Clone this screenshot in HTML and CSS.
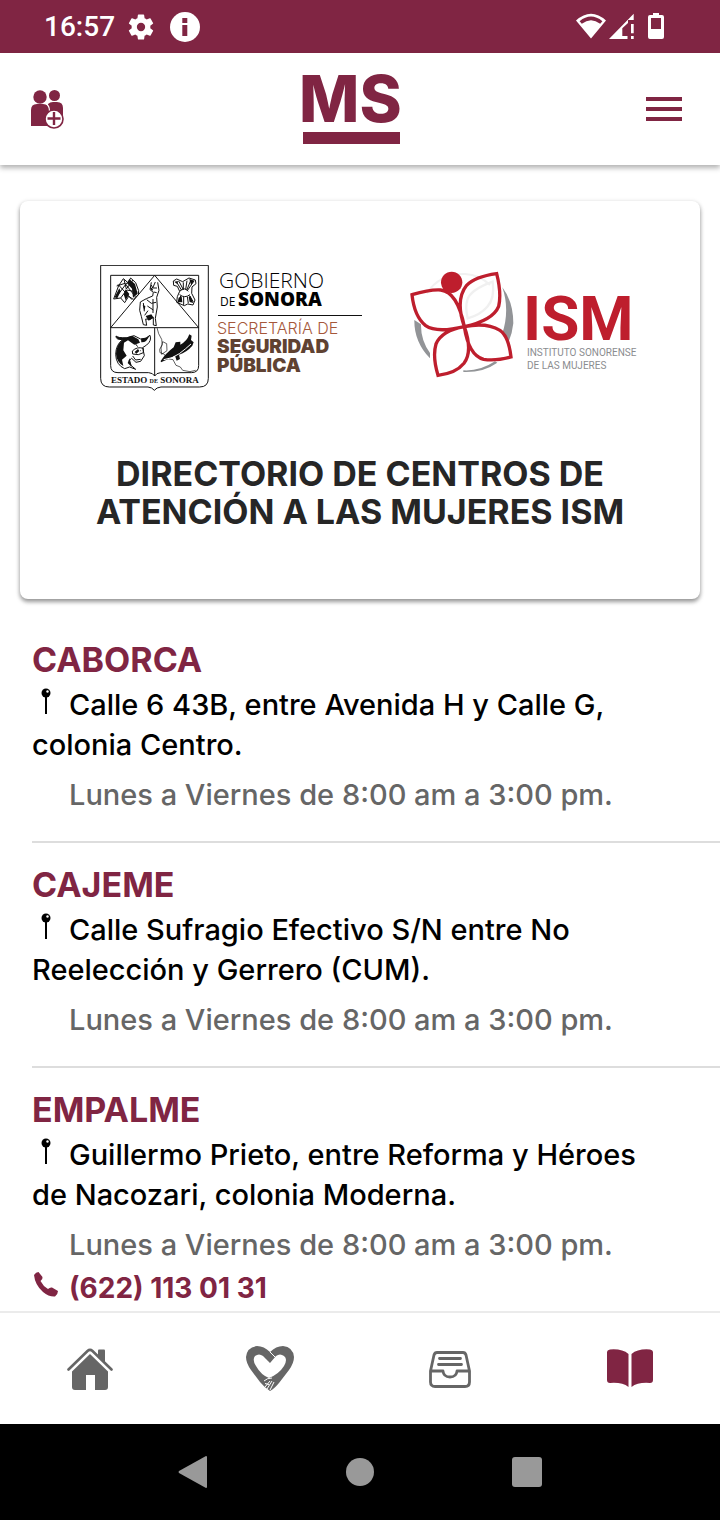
FILE: index.html
```html
<!DOCTYPE html>
<html lang="es">
<head>
<meta charset="utf-8">
<meta name="viewport" content="width=device-width, initial-scale=1">
<title>Directorio de Centros de Atención a las Mujeres ISM</title>
<link rel="stylesheet" href="styles.css">
</head>
<body>
<div class="status-bar">
  <div class="status-left">
    <span class="clock">16:57</span>
    <svg width="26" height="26" viewBox="2 2 20 20" fill="#fff" aria-hidden="true"><path d="M19.14 12.94c.04-.3.06-.61.06-.94s-.02-.64-.07-.94l2.03-1.58a.49.49 0 0 0 .12-.61l-1.92-3.32a.49.49 0 0 0-.59-.22l-2.39.96a7 7 0 0 0-1.62-.94l-.36-2.54A.48.48 0 0 0 13.92 2.400h-3.840a.48.48 0 0 0-.47.41l-.36 2.540a7.300 7.300 0 0 0-1.620.94l-2.390-.96a.49.49 0 0 0-.59.22L2.740 8.870a.48.48 0 0 0 .12.61l2.030 1.580c-.05.3-.09.63-.09.94s.02.64.07.94l-2.030 1.580a.49.49 0 0 0-.12.61l1.920 3.320c.12.22.37.29.59.22l2.390-.96c.5.38 1.030.7 1.620.94l.36 2.540c.05.24.24.41.48.41h3.840c.24 0 .44-.17.47-.41l.36-2.540a7 7 0 0 0 1.620-.94l2.390.96c.22.08.47 0 .59-.22l1.920-3.320a.48.48 0 0 0-.12-.61zM12 15.200a3.200 3.200 0 1 1 0-6.400 3.200 3.200 0 0 1 0 6.400z"/></svg>
    <svg class="info" width="30" height="30" viewBox="0 0 30 30" aria-hidden="true"><circle cx="15" cy="15" r="15" fill="#fff"/><path d="M12.300 6h5v5h-5zM12.300 13h5v11h-5z" fill="#802543"/></svg>
  </div>
  <div class="status-right">
    <svg width="88" height="27" viewBox="0 0 88 27" fill="#fff" aria-hidden="true">
      <path fill-rule="evenodd" d="M0 7.500Q15-6 30 7.500L15 25.500ZM3.600 8.200 5.800 10.800Q15 3.500 24.200 10.800L26.400 8.200Q15-1 3.600 8.200Z"/>
      <path d="M57.700.700V7H52V10L46.300 15.300V23H51.500V26H33ZM55 11h2.700v9.300H55zM55 23h2.700v3H55z"/>
      <path fill-rule="evenodd" d="M77 0h6v2h3q2 0 2 2v20q0 2-2 2H74q-2 0-2-2V4q0-2 2-2h3ZM75 5v11h10V5Z"/>
    </svg>
  </div>
</div>

<header class="app-header">
  <button class="icon-button" type="button" aria-label="Agregar contactos">
    <svg width="33" height="39" viewBox="0 0 33 39" fill="#802543"><circle cx="9" cy="7" r="6.700"/><circle cx="23.500" cy="5.500" r="5.500"/><path d="M17 14q2-2 5-2h4q6 0 6 6v8H17ZM0 20q0-6 6-6h6q6 0 6 6v16H0Z"/><path d="M15 13.500Q18.500 16 18.500 21" fill="none" stroke="#fff" stroke-width="1.200"/><circle cx="23" cy="29" r="9" fill="#fff" stroke="#802543" stroke-width="1.600"/><path d="M23 22v13M16.500 28.500h13" stroke="#802543" stroke-width="2.400"/></svg>
  </button>
  <svg class="ms-logo" width="98" height="69" viewBox="0 0 98 69" role="img" aria-label="MS"><text class="ms-letters" x="-4" y="47">MS</text><path d="M0 57h97v12H0z" fill="#802543"/></svg>
  <button class="icon-button" type="button" aria-label="Menú">
    <svg width="36" height="24" viewBox="0 0 36 24" fill="#802543"><path d="M0 0h36v4H0zM0 10h36v4H0zM0 20h36v4H0z"/></svg>
  </button>
</header>

<main class="content">
  <section class="card">
    <div class="logos">
      <svg width="262" height="126" viewBox="0 0 262 126" role="img" aria-label="Gobierno de Sonora, Secretaría de Seguridad Pública">
        <g transform="scale(.3333) translate(-30 -30)" fill="none" stroke="#111" stroke-width="3" stroke-linejoin="round">
          <path d="M32 31H355V370Q355 396 329 396H213Q200 397 193 406Q186 397 174 396H58Q32 396 32 370Z"/>
          <path d="M62 61H326V332Q326 353 304 353H212Q199 354 194 363Q189 354 176 353H84Q62 353 62 332ZM62 218H326M194 218V363M62 218 194 61 326 218" stroke-width="3"/>
          <path d="M71 132 86 92 100 71 114 83 122 69 137 83 146 107 145 119 130 133 116 124 104 143 92 129ZM77 129 111 83M84 88l42 46M80 93l25-8 31 40M102 73l7 29 20-27M92 129l18-24 32 6" stroke-width="3"/>
          <path d="M118 72l17 15 8 29-14 12-3-27-15-16ZM74 126l14-26 4 9-10 21ZM107 103l11 14-11 19-6-18Z" fill="#111" stroke="none"/>
          <path d="M184 82 180 104 190 112 188 123 169 131 151 141 149 166 154 184 160 209 170 211 167 192 180 193 190 187 190 210 199 212 196 190 202 156 200 127 207 106 203 82M184 90l4 9 8-18M188 99h13M191 111l9 2M170 134l14 11 14-3M160 144l3 25M172 153l18 12M164 181l10-14M189 132v42" stroke-width="3"/>
          <path d="M167 183l17-5 7 10-15 9ZM181 96l8 6-2 6-6-6ZM158 150l8 3-2 14Z" fill="#111" stroke="none"/>
          <path d="M250 78 260 72 278 80 297 69 316 75 318 86 306 96 305 115 315 135 309 150 293 147 283 152 260 142 262 125 269 109 262 94 251 91ZM259 80l16 26M267 79l13 25M280 82v22M291 77l-4 27M302 77l-12 29M311 79l-19 28M269 109q14-15 26 0M269 119q15 12 31 0M272 123l-6 20M281 126v24M292 125l3 20M298 122l12 18" stroke-width="3"/>
          <path d="M253 80l14-2-7 8ZM298 72l16 5-11 12ZM266 128l9-4 2 18-14-1ZM296 126l6-3 8 21-11-3Z" fill="#111" stroke="none"/>
          <path d="M78 243Q76 254 98 254 78 268 77 298 78 330 104 341L119 336 137 343Q121 334 117 317L125 310 138 322 152 319 163 302 158 278 170 270Q186 257 180 241 172 252 152 252L132 242 109 249Q84 249 78 243Z" stroke-width="3"/>
          <path d="M78 243q18 10 48-1l19 11 5 10-17 6-19-13-12 7-2 23 10 16-14 12 4 19q-20-11-22-36 0-26 20-43-18 2-20-11ZM134 291l10-9 4 6-9 8ZM119 310l-6 14 12 12-4-18ZM154 262q17 1 25-22-12 12-26 11Z" fill="#111" stroke="none"/>
          <path d="M127 288q14-14 33-8v13q-14 10-32 4ZM136 266l7 9M128 303l9 12 15-2M138 290h2M151 287h2" stroke-width="3"/>
          <path d="M201 218l5 18 9 17 2 16-8 14 1 10 12 4 10 14 17 3 9 17 13 5 7 10 22 4 17-4M213 279l5-19 12 6 1 21-16 11Z" stroke-width="2"/>
          <path d="M212 318Q226 296 251 277L257 262 271 260 271 269Q291 259 298 238L305 242 303 255 311 262 307 272Q290 292 267 299L270 312 260 317 255 302Q232 314 213 322Z" fill="#111" stroke="none"/>
          <path d="M221 314Q248 311 268 296T303 267" stroke="#fff" stroke-width="3"/>
        </g>
        <text class="crest-name" x="11" y="118">ESTADO <tspan class="crest-small">DE</tspan> SONORA</text>
        <text class="gob-light" x="119" y="23">GOBIERNO</text>
        <text class="gob-small" x="120" y="41">DE</text>
        <text class="gob-bold" x="138" y="41">SONORA</text>
        <path d="M118 50.500h144" stroke="#111"/>
        <text class="sec-light" x="117" y="69">SECRETARÍA DE</text>
        <text class="sec-bold" x="117" y="88">SEGURIDAD</text>
        <text class="sec-bold" x="117" y="107">PÚBLICA</text>
      </svg>
      <svg width="230" height="108" viewBox="0 0 230 108" role="img" aria-label="ISM, Instituto Sonorense de las Mujeres">
        <g transform="scale(.3333) translate(-30 -30)" fill="none">
          <path d="M80 100Q120 40 195 42Q240 45 270 75" stroke="#f1f1f1" stroke-width="6"/>
          <path d="M43 180Q42 245 90 295V279Q62 240 63 193ZM307 82Q340 125 340 190Q337 220 326 245L307 220Q330 150 307 82ZM190 331Q240 334 285 304L292 308Q250 338 190 336Z" fill="#929497"/>
          <path d="M278 65Q210 90 202 120Q195 140 203 175Q240 165 262 140Q285 115 278 65Z" stroke="#f0f0f0" stroke-width="7"/>
          <path d="M193 200Q172 95 122 90Q90 88 36 104Q43 170 77 197Q110 220 193 200ZM193 200Q165 120 200 76Q225 50 290 41Q305 100 296 139Q279 181 193 200ZM193 200Q125 212 108 252Q97 290 114 346Q168 340 192 310Q219 274 193 200ZM193 200Q258 186 300 211Q326 229 333 291Q285 304 251 298Q206 286 193 200Z" stroke="#be1e2d" stroke-width="10" stroke-linejoin="miter"/>
          <circle cx="155" cy="67" r="32" fill="#be1e2d"/>
        </g>
        <text class="ism-letters" x="113" y="70">ISM</text>
        <text class="ism-name" x="117" y="86">INSTITUTO SONORENSE</text>
        <text class="ism-name" x="117" y="99">DE LAS MUJERES</text>
      </svg>
    </div>
    <h1 class="title">DIRECTORIO DE CENTROS DE<br>ATENCIÓN A LAS MUJERES ISM</h1>
  </section>

  <ul class="centers">
    <li class="center">
      <h2 class="city">CABORCA</h2>
      <p class="address"><svg class="pin" width="37" height="27" viewBox="0 0 37 27" aria-hidden="true"><path d="M13 8h2v18h-2z"/><circle cx="14" cy="5" r="4.500"/><circle cx="15.500" cy="3.500" r="1.200" fill="#fff"/></svg>Calle 6 43B, entre Avenida H y Calle G, colonia Centro.</p>
      <p class="hours">Lunes a Viernes de 8:00 am a 3:00 pm.</p>
    </li>
    <li class="center">
      <h2 class="city">CAJEME</h2>
      <p class="address"><svg class="pin" width="37" height="27" viewBox="0 0 37 27" aria-hidden="true"><path d="M13 8h2v18h-2z"/><circle cx="14" cy="5" r="4.500"/><circle cx="15.500" cy="3.500" r="1.200" fill="#fff"/></svg>Calle Sufragio Efectivo S/N entre No Reelección y Gerrero (CUM).</p>
      <p class="hours">Lunes a Viernes de 8:00 am a 3:00 pm.</p>
    </li>
    <li class="center">
      <h2 class="city">EMPALME</h2>
      <p class="address"><svg class="pin" width="37" height="27" viewBox="0 0 37 27" aria-hidden="true"><path d="M13 8h2v18h-2z"/><circle cx="14" cy="5" r="4.500"/><circle cx="15.500" cy="3.500" r="1.200" fill="#fff"/></svg>Guillermo Prieto, entre Reforma y Héroes de Nacozari, colonia Moderna.</p>
      <p class="hours">Lunes a Viernes de 8:00 am a 3:00 pm.</p>
      <a class="phone" href="tel:6221130131"><svg class="handset" width="37" height="25" viewBox="0 0 37 25" fill="#802543" aria-hidden="true"><path d="M2 3Q4 0 6.500 0L10.500 5Q11 7 8.500 9Q11 14 16 17Q18 15 20 15.500L26 19Q26 22 23 24.500Q17 25 11 20Q3 13 2 3Z"/></svg>(622) 113 01 31</a>
    </li>
  </ul>
</main>

<nav class="tabs" aria-label="Principal">
  <a class="tab" href="#inicio" aria-label="Inicio"><svg width="46" height="44" viewBox="0 0 46 44" fill="#666"><path d="M31 3.500q0-1 1-1h5q1 0 1 1V16l-7-7Z"/><path d="M1.500 22.500 20.500 4Q23 1.800 25.500 4L44.500 22.500" fill="none" stroke="#666" stroke-width="2.600" stroke-linecap="round"/><path d="M5 24.500 23 7 41 24.500V40q0 3-3 3H28V28h-9v15H8q-3 0-3-3Z"/></svg></a>
  <a class="tab" href="#apoyo" aria-label="Apoyo"><svg width="48" height="46" viewBox="0 0 48 46" fill="#666"><path fill-rule="evenodd" d="M24 45Q19 42 14 36L5 24Q0 17 0 11Q1 1 11 0Q18 0 24 6Q30 0 37 0Q47 1 48 11Q48 17 43 24L33 37Q28 43 24 45ZM24 17 17 10Q13 7 9 10Q6 14 10 20Q15 29 23 32Q33 28 38 20Q42 13 38 10Q34 7 30 10Z"/><path d="M24 6 29.500 11.500M18 35q3-3 8-3M19 41l5-6M21 43l5-8M24 44l4-8M19 37.500l4 1" fill="none" stroke="#fff" stroke-width="1"/></svg></a>
  <a class="tab" href="#tramites" aria-label="Trámites"><svg width="42" height="40" viewBox="0 0 42 40" fill="none" stroke="#666" stroke-width="2.800" stroke-linecap="round" stroke-linejoin="round"><path d="M1.500 22 5 6Q5.800 3.500 8 3.500H34Q36.200 3.500 37 6L40.500 22V33Q40.500 37.500 36 37.500H6Q1.500 37.500 1.500 33ZM1.500 22H14Q14.500 28 21 28T28 22H40M10.500 9.500H31.500M9.500 15.500H32.500"/></svg></a>
  <a class="tab" href="#directorio" aria-label="Directorio" aria-current="page"><svg width="46" height="42" viewBox="0 0 46 42" fill="#802543"><path d="M3 1.500Q15 .500 21.500 6V39Q15 34 3 35Q0 35 0 32V4.500Q0 2 3 1.500ZM43 1.500Q31 .500 24.500 6V39Q31 34 43 35Q46 35 46 32V4.500Q46 2 43 1.500Z"/></svg></a>
</nav>

<div class="system-nav">
  <button class="system-button" type="button" aria-label="Atrás"><svg width="30" height="32" viewBox="0 0 30 32" fill="#999"><path d="M28 0q1 0 1 1v30q0 1-1 1L1 17q-1-1 0-2Z"/></svg></button>
  <button class="system-button" type="button" aria-label="Pantalla de inicio"><svg width="28" height="28" viewBox="0 0 28 28" fill="#999"><circle cx="14" cy="14" r="14"/></svg></button>
  <button class="system-button" type="button" aria-label="Recientes"><svg width="30" height="30" viewBox="0 0 30 30" fill="#999"><rect width="30" height="30" rx="3"/></svg></button>
</div>
</body>
</html>
```
FILE: styles.css
```css
* { box-sizing: border-box; }

body {
  margin: 0;
  height: 100vh;
  display: flex;
  flex-direction: column;
  background: #fff;
  color: #000;
  font-family: Inter, "Open Sans", sans-serif;
  font-size: 29px;
  line-height: 40px;
}

svg { display: block; }

.status-bar {
  flex: none;
  display: flex;
  justify-content: space-between;
  align-items: center;
  height: 53px;
  padding: 0 56px 0 44px;
  background: #802543;
  color: #fff;
}
.status-left { display: flex; align-items: center; }
.clock { margin-right: 13px; font-family: Roboto, sans-serif; font-size: 28px; font-weight: 500; }
.info { margin-left: 16px; }

.app-header {
  flex: none;
  display: grid;
  grid-template-columns: 1fr auto 1fr;
  align-items: center;
  height: 112px;
  padding: 0 38px 0 31px;
  background: #fff;
  box-shadow: 0 3px 5px rgba(0, 0, 0, .3);
}
.icon-button, .system-button { padding: 0; border: 0; background: none; }
.icon-button:last-child { justify-self: end; }
.ms-logo { margin-right: 9px; overflow: visible; }
.ms-letters { font: 800 64px Inter, sans-serif; fill: #802543; }

.content {
  flex: 1;
  min-height: 0;
  overflow-y: auto;
  scrollbar-width: none;
  margin-top: 6px;
  padding-top: 30px;
}

.card {
  margin: 0 20px;
  padding: 64px 20px 68px;
  border-radius: 8px;
  background: #fff;
  box-shadow: 0 3px 4px rgba(0, 0, 0, .35), 0 1px 5px rgba(0, 0, 0, .15);
}
.logos { display: flex; justify-content: center; align-items: flex-start; gap: 48px; padding-left: 20px; }
.logos svg { flex: 0 1 auto; min-width: 0; }
.logos svg:last-child { margin-top: 5px; }
.title {
  margin: 64px 0 0;
  color: #262626;
  font-size: 34px;
  font-weight: 700;
  line-height: 38px;
  text-align: center;
}

.crest-name { font: 700 9px "Liberation Serif", serif; fill: #111; }
.crest-small { font-size: 6px; }
.gob-light { font: 300 21px "Open Sans", sans-serif; fill: #000; }
.gob-small { font: 400 12px "Open Sans", sans-serif; fill: #000; }
.gob-bold { font: 800 19px "Open Sans", sans-serif; fill: #000; }
.sec-light { font: 300 16px Inter, sans-serif; fill: #a5573a; }
.sec-bold { font: 900 19px Inter, sans-serif; fill: #5f4232; }
.ism-letters { font: 700 62px Roboto, sans-serif; fill: #be1e2d; }
.ism-name { font: 400 10px Roboto, sans-serif; fill: #8b8d90; }

.centers { margin: 19px 0 0; padding: 0 0 0 32px; list-style: none; }
.center { padding: 22px 0 26px; border-bottom: 2px solid #ddd; }
.center:last-child { padding-bottom: 3px; border-bottom: 0; }
.city { margin: 0; color: #802543; font-size: 34px; font-weight: 700; line-height: 40px; }
.address { margin: 5px 0 0; padding-right: 68px; font-weight: 500; }
.pin { display: inline-block; vertical-align: 0; }
.hours { margin: 10px 0 0; padding-left: 37px; color: #666; font-weight: 500; }
.phone { display: flex; align-items: center; margin-top: 3px; color: #802543; font-size: 28px; font-weight: 700; text-decoration: none; }
.handset { margin-bottom: 8px; }

.tabs {
  flex: none;
  display: grid;
  grid-template-columns: repeat(4, 1fr);
  height: 113px;
  border-top: 2px solid #ebebeb;
  background: #fff;
}
.tab { display: flex; align-items: center; justify-content: center; }

.system-nav {
  flex: none;
  display: flex;
  justify-content: center;
  align-items: center;
  gap: 138px;
  height: 96px;
  background: #000;
}
```
